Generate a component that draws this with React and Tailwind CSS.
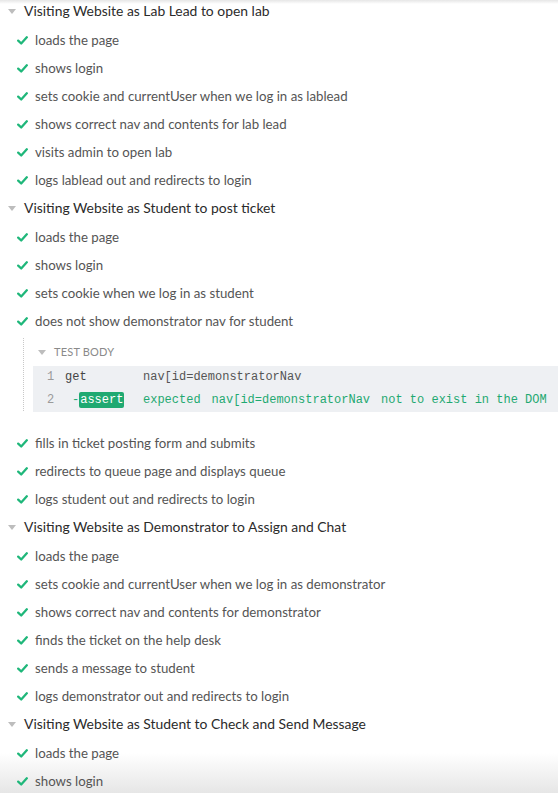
import React from "react";

const suites = [
  {
    title: "Visiting Website as Lab Lead to open lab",
    tests: [
      "loads the page",
      "shows login",
      "sets cookie and currentUser when we log in as lablead",
      "shows correct nav and contents for lab lead",
      "visits admin to open lab",
      "logs lablead out and redirects to login",
    ],
  },
  {
    title: "Visiting Website as Student to post ticket",
    tests: [
      "loads the page",
      "shows login",
      "sets cookie when we log in as student",
      { name: "does not show demonstrator nav for student", open: true },
      "fills in ticket posting form and submits",
      "redirects to queue page and displays queue",
      "logs student out and redirects to login",
    ],
  },
  {
    title: "Visiting Website as Demonstrator to Assign and Chat",
    tests: [
      "loads the page",
      "sets cookie and currentUser when we log in as demonstrator",
      "shows correct nav and contents for demonstrator",
      "finds the ticket on the help desk",
      "sends a message to student",
      "logs demonstrator out and redirects to login",
    ],
  },
  {
    title: "Visiting Website as Student to Check and Send Message",
    tests: ["loads the page", "shows login"],
  },
];

const Caret = () => (
  <svg width="8" height="5" viewBox="0 0 8 5" className="shrink-0">
    <polygon points="0,0 8,0 4,5" fill="#bdbdbd" />
  </svg>
);

const Check = () => (
  <svg width="11" height="9" viewBox="0 0 11 9" className="shrink-0">
    <path
      d="M1.2 4.6 L4.2 7.5 L9.8 1.3"
      fill="none"
      stroke="#1fb77a"
      strokeWidth="2.3"
      strokeLinecap="round"
      strokeLinejoin="round"
    />
  </svg>
);

const mono = { fontFamily: '"Liberation Mono", monospace' };

const TestBody = () => (
  <div className="relative pl-[33px] pt-[6px] pb-[18px]">
    <div className="absolute left-[23px] top-[2px] bottom-[19px] border-l border-dotted border-[#c8c8c8]" />
    <div className="flex items-center h-[21px] pl-[5px] gap-[8px]">
      <Caret />
      <span className="text-[11px] text-[#8a8a8a] uppercase tracking-[0.2px]">Test Body</span>
    </div>
    <div className="mt-[3px] bg-[#eef0f3] text-[12px]" style={mono}>
      <div className="flex items-center h-[23px]">
        <span className="w-[32px] pl-[14px] text-[#9a9a9a]">1</span>
        <span className="w-[78px] text-[#444]">get</span>
        <span className="text-[#555]">nav[id=demonstratorNav</span>
      </div>
      <div className="flex items-center h-[23px]">
        <span className="w-[32px] pl-[14px] text-[#9a9a9a]">2</span>
        <span className="w-[78px] flex items-center text-[#1fa971]">
          <span className="ml-[7px]">-</span>
          <span className="bg-[#1fa971] text-white px-[1px] h-[16px] leading-[16px] rounded-[2px]">assert</span>
        </span>
        <span className="text-[#1fa971] whitespace-pre">
          expected<span className="ml-[11px]">nav[id=demonstratorNav</span>
          <span className="ml-[11px]">not to exist in the DOM</span>
        </span>
      </div>
    </div>
  </div>
);

export default function App() {
  return (
    <div
      className="relative w-[558px] h-[793px] overflow-hidden bg-white"
      style={{ fontFamily: "Lato, sans-serif" }}
    >
      <div className="absolute bottom-0 left-0 right-0 h-[40px] bg-gradient-to-b from-white to-[#e6e6e6]" />
      <div className="relative mt-[-2.5px]">
        {suites.map((s) => (
          <div key={s.title}>
            <div className="flex items-center h-[29px] pb-[1px] pl-[8px] gap-[8px]">
              <Caret />
              <span className="text-[13.9px] text-[#2b2b2b]">{s.title}</span>
            </div>
            {s.tests.map((t, i) => {
              const name = typeof t === "string" ? t : t.name;
              return (
                <div key={i}>
                  <div className="flex items-center h-[28px] pl-[17px] gap-[7px]">
                    <Check />
                    <span className="text-[13.25px] text-[#555]">{name}</span>
                  </div>
                  {typeof t !== "string" && t.open && <TestBody />}
                </div>
              );
            })}
          </div>
        ))}
      </div>
      <div className="absolute top-0 left-0 right-0 h-[4px] bg-gradient-to-b from-[#e6e6e6] to-transparent" />
    </div>
  );
}
